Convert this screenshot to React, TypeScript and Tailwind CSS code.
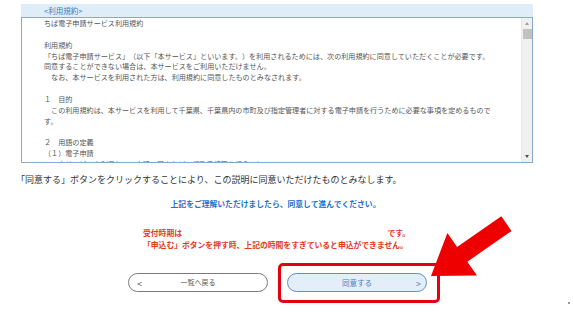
const termsLines: string[] = [
  'ちば電子申請サービス利用規約',
  '',
  '利用規約',
  '「ちば電子申請サービス」（以下「本サービス」といいます。）を利用されるためには、次の利用規約に同意していただくことが必要です。',
  '同意することができない場合は、本サービスをご利用いただけません。',
  '　なお、本サービスを利用された方は、利用規約に同意したものとみなされます。',
  '',
  '１　目的',
  '　この利用規約は、本サービスを利用して千葉県、千葉県内の市町及び指定管理者に対する電子申請を行うために必要な事項を定めるものです。',
  '',
  '２　用語の定義',
  '（１）電子申請',
  '　　本サービスを利用して、申請・届出などの行政手続等を行うこと。',
  '',
]

function ScrollBar() {
  return (
    <div className="w-[11px] shrink-0 bg-[#f0f0f0] border-l border-[#e8e8e8] flex flex-col items-center">
      <div className="h-[11px] flex items-center justify-center">
        <div className="w-0 h-0 border-l-[2.5px] border-r-[2.5px] border-b-[3px] border-l-transparent border-r-transparent border-b-[#a0a0a0]" />
      </div>
      <div className="w-[9px] h-[10px] bg-[#c1c1c1]" />
      <div className="flex-1" />
      <div className="h-[11px] flex items-center justify-center">
        <div className="w-0 h-0 border-l-[2.5px] border-r-[2.5px] border-t-[3px] border-l-transparent border-r-transparent border-t-[#505050]" />
      </div>
    </div>
  )
}

function PillButton({ label, side, primary }: { label: string; side: 'left' | 'right'; primary?: boolean }) {
  return (
    <div
      className={`relative w-[140px] h-[19px] rounded-full border flex items-center justify-center ${
        primary ? 'bg-[#e4eef9] border-[#5d8fc8] text-[#4a7fc0]' : 'bg-white border-[#7a7a7a] text-[#555]'
      }`}
    >
      <span className={`${primary ? 'text-[7.5px]' : 'text-[7px]'} leading-none`}>{label}</span>
      <span
        className={`absolute top-1/2 -translate-y-1/2 text-[9px] leading-none ${side === 'left' ? 'left-[8px]' : 'right-[5px]'}`}
      >
        {side === 'left' ? '<' : '>'}
      </span>
    </div>
  )
}

export default function App() {
  return (
    <div className="relative w-[573px] h-[318px] bg-white overflow-hidden font-['Noto_Sans_CJK_JP',sans-serif] [text-spacing-trim:space-all]">
      <div className="ml-[21px] pt-[4px] w-[512px]">
        <div className="h-[13px] bg-[#deedf8] pl-[23px] text-[7.5px] leading-[13px] text-[#3b7cc4]">&lt;利用規約&gt;</div>
        <div className="h-[146px] border border-[#86a9cc] flex overflow-hidden">
          <div className="flex-1 overflow-hidden pl-[22px]">
            <div className="w-[451px] text-[7.1px] leading-[10.85px] text-[#555]">
              {termsLines.map((line, i) => (
                <p key={i} className="min-h-[10.85px]">
                  {line}
                </p>
              ))}
            </div>
          </div>
          <ScrollBar />
        </div>
      </div>

      <p className="ml-[16px] mt-[11px] text-[9px] leading-[12px] text-[#333]">
        「同意する」ボタンをクリックすることにより、この説明に同意いただけたものとみなします。
      </p>

      <p className="w-[551px] mt-[12px] text-center text-[7.8px] leading-[12px] font-bold text-[#2270cf]">
        上記をご理解いただけましたら、同意して進んでください。
      </p>

      <div className="ml-[143px] mt-[17px] w-[267px] text-[7.8px] leading-[12px] font-bold text-[#e5391b]">
        <div className="flex justify-between">
          <span>受付時期は</span>
          <span>です。</span>
        </div>
        <p className="whitespace-nowrap">「申込む」ボタンを押す時、上記の時間をすぎていると申込ができません。</p>
      </div>

      <div className="ml-[128px] mt-[22px] flex gap-[19px]">
        <PillButton label="一覧へ戻る" side="left" />
        <PillButton label="同意する" side="right" primary />
      </div>

      <div className="absolute left-[278px] top-[263px] w-[162px] h-[40px] border-[3px] border-[#e3000f] rounded-[5px]" />

      <svg className="absolute left-0 top-0" width="573" height="318" viewBox="0 0 573 318">
        <polygon
          points="431,276 447.4,233 457.1,246.9 501.3,216.2 511.5,231 467.3,261.7 477,275.6"
          fill="#ee0000"
        />
      </svg>

      <div className="absolute left-[568px] top-[302px] w-[2px] h-[2px] bg-[#999]" />
    </div>
  )
}
